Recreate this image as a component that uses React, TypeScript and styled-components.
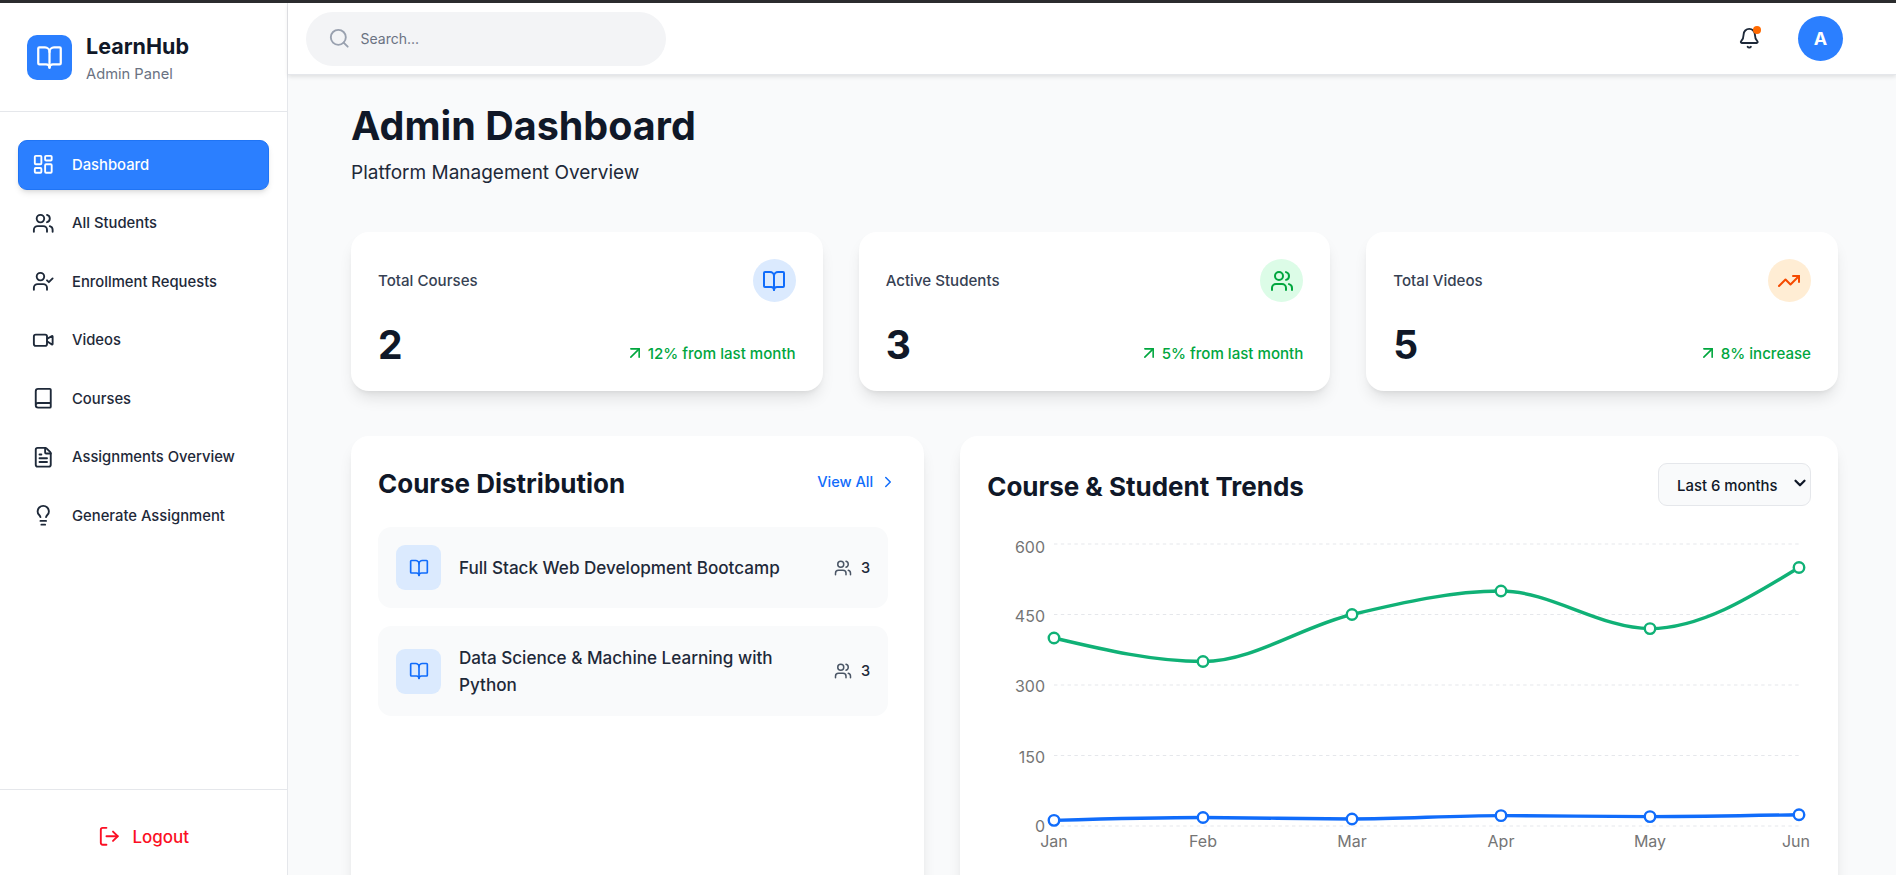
import React from "react";
import styled, {createGlobalStyle} from "styled-components";
import {
    ArrowUpRight, Bell, Book, BookOpen, ChevronDown, ChevronRight, FileText, LayoutDashboard,
    Lightbulb, LogOut, Search, TrendingUp, UserCheck, Users, Video
} from "lucide-react";

const blue = "#2b7fff";
const link = "#106cfb";
const green = "#00a63e";
const ink = "#101828";
const slate = "#1e2939";

const GlobalStyle = createGlobalStyle`
html, body { margin: 0; height: 100%; overflow: hidden; }
body { font-family: Inter, "Noto Sans", "Liberation Sans", sans-serif; color: ${ink}; background: #f9fafb; }
* { box-sizing: border-box; }
`;

const navItems = [
    {label: "Dashboard", icon: LayoutDashboard, active: true},
    {label: "All Students", icon: Users},
    {label: "Enrollment Requests", icon: UserCheck},
    {label: "Videos", icon: Video},
    {label: "Courses", icon: Book},
    {label: "Assignments Overview", icon: FileText},
    {label: "Generate Assignment", icon: Lightbulb},
];

const stats = [
    {label: "Total Courses", value: 2, trend: "12% from last month", icon: BookOpen, bg: "#dbeafe", fg: link},
    {label: "Active Students", value: 3, trend: "5% from last month", icon: Users, bg: "#dcfce7", fg: green},
    {label: "Total Videos", value: 5, trend: "8% increase", icon: TrendingUp, bg: "#ffedd4", fg: "#f54a00"},
];

const courses = [
    {title: "Full Stack Web Development Bootcamp", students: 3},
    {title: "Data Science & Machine Learning with Python", students: 3},
];

// chart geometry, in px inside the svg
const months = ["Jan", "Feb", "Mar", "Apr", "May", "Jun"];
const left = 67;
const stepX = 149;
const zeroY = 293;
const pxPerUnit = 282 / 600;
const xs = months.map((_, i) => left + i * stepX);
const toY = (v: number) => zeroY - v * pxPerUnit;
const greenLine = [400, 350, 450, 500, 420, 550].map(toY);
const blueLine = [12, 18, 15, 22, 20, 24].map(toY);
const ticks = [600, 450, 300, 150, 0];

const sign = (n: number) => (n < 0 ? -1 : 1);

// same curve as d3's curveMonotoneX
const monotonePath = (px: number[], py: number[]) => {
    const n = px.length;
    const s = px.slice(1).map((x, i) => (py[i + 1] - py[i]) / (x - px[i]));
    const t = px.map(() => 0);
    for (let i = 1; i < n - 1; i++) {
        const h0 = px[i] - px[i - 1];
        const h1 = px[i + 1] - px[i];
        const p = (s[i - 1] * h1 + s[i] * h0) / (h0 + h1);
        t[i] = (sign(s[i - 1]) + sign(s[i])) * Math.min(Math.abs(s[i - 1]), Math.abs(s[i]), 0.5 * Math.abs(p)) || 0;
    }
    t[0] = (3 * s[0] - t[1]) / 2;
    t[n - 1] = (3 * s[n - 2] - t[n - 2]) / 2;
    let d = `M${px[0]},${py[0]}`;
    for (let i = 0; i < n - 1; i++) {
        const h = (px[i + 1] - px[i]) / 3;
        d += `C${px[i] + h},${py[i] + h * t[i]},${px[i + 1] - h},${py[i + 1] - h * t[i + 1]},${px[i + 1]},${py[i + 1]}`;
    }
    return d;
};

const Series: React.FC<{ values: number[], color: string }> = ({values, color}) => <>
    <path d={monotonePath(xs, values)} fill="none" stroke={color} strokeWidth={3.4}/>
    {xs.map((x, i) => <circle key={x} cx={x} cy={values[i]} r={5.25} fill="#fff" stroke={color} strokeWidth={2.4}/>)}
</>;

const App: React.FC = () => <>
    <GlobalStyle/>
    <TopEdge/>
    <Shell>
        <Sidebar>
            <Brand>
                <BrandMark><BookOpen size={27} strokeWidth={2}/></BrandMark>
                <BrandText>
                    <BrandName>LearnHub</BrandName>
                    <BrandSub>Admin Panel</BrandSub>
                </BrandText>
            </Brand>
            <Nav>
                {navItems.map(item => <NavItem key={item.label} $active={!!item.active}>
                    <item.icon size={22.5} strokeWidth={2}/>
                    {item.label}
                </NavItem>)}
            </Nav>
            <SideFooter>
                <Logout><LogOut size={22.5} strokeWidth={2}/>Logout</Logout>
            </SideFooter>
        </Sidebar>
        <Column>
            <Header>
                <SearchBox>
                    <Search size={22.5} color="#99a1af" strokeWidth={2}/>
                    <SearchInput placeholder="Search..."/>
                </SearchBox>
                <HeaderRight>
                    <BellWrap>
                        <Bell size={22.5} color={slate} strokeWidth={2}/>
                        <BellDot/>
                    </BellWrap>
                    <Avatar>A</Avatar>
                </HeaderRight>
            </Header>
            <Main>
                <PageTitle>Admin Dashboard</PageTitle>
                <PageSub>Platform Management Overview</PageSub>
                <StatGrid>
                    {stats.map(stat => <StatCard key={stat.label}>
                        <StatTop>
                            <StatLabel>{stat.label}</StatLabel>
                            <StatIcon $bg={stat.bg} $fg={stat.fg}><stat.icon size={24} strokeWidth={2}/></StatIcon>
                        </StatTop>
                        <StatBottom>
                            <StatValue>{stat.value}</StatValue>
                            <Trend><ArrowUpRight size={20} strokeWidth={1.9}/>{stat.trend}</Trend>
                        </StatBottom>
                    </StatCard>)}
                </StatGrid>
                <LowerGrid>
                    <Panel $span={2}>
                        <DistHead>
                            <PanelTitle>Course Distribution</PanelTitle>
                            <ViewAll>View All<ChevronRight size={18} strokeWidth={2}/></ViewAll>
                        </DistHead>
                        <CourseList>
                            {courses.map(course => <CourseRow key={course.title}>
                                <CourseIcon><BookOpen size={20} strokeWidth={2}/></CourseIcon>
                                <CourseTitle>{course.title}</CourseTitle>
                                <CourseCount><Users size={18} color="#4a5565" strokeWidth={2}/>{course.students}</CourseCount>
                            </CourseRow>)}
                        </CourseList>
                    </Panel>
                    <Panel $span={3}>
                        <TrendHead>
                            <PanelTitle>Course &amp; Student Trends</PanelTitle>
                            <SelectWrap>
                                <RangeSelect defaultValue="6">
                                    <option value="6">Last 6 months</option>
                                    <option value="12">Last year</option>
                                </RangeSelect>
                                <SelectArrow><ChevronDown size={18} strokeWidth={3}/></SelectArrow>
                            </SelectWrap>
                        </TrendHead>
                        <Chart width="824" height="337" viewBox="0 0 824 337">
                            {ticks.map(t => <g key={t}>
                                <line x1={left} x2={xs[5]} y1={toY(t)} y2={toY(t)} stroke="#e5e7eb" strokeWidth={1.1} strokeDasharray="3.4 3.4"/>
                                <Tick x={58} y={t === 600 ? toY(t) + 9 : t === 0 ? toY(t) + 6 : toY(t) + 7} textAnchor="end">{t}</Tick>
                            </g>)}
                            {months.map((m, i) => <Tick key={m} x={i === 5 ? xs[i] + 11 : xs[i]} y={314} textAnchor={i === 5 ? "end" : "middle"}>{m}</Tick>)}
                            <Series values={greenLine} color="#10b176"/>
                            <Series values={blueLine} color={link}/>
                        </Chart>
                    </Panel>
                </LowerGrid>
            </Main>
        </Column>
    </Shell>
</>;

const TopEdge = styled.div`
height: 3px;
background: #2b2c2e;
`;
const Shell = styled.div`
display: flex;
height: 872px;
overflow: hidden;
`;
const Sidebar = styled.aside`
width: 288px;
flex-shrink: 0;
display: flex;
flex-direction: column;
background: #fff;
border-right: 1px solid #e5e7eb;
`;
const Brand = styled.div`
height: 109px;
flex-shrink: 0;
display: flex;
align-items: center;
gap: 14px;
padding: 0 27px;
border-bottom: 1px solid #e5e7eb;
`;
const BrandMark = styled.div`
width: 45px;
height: 45px;
display: flex;
align-items: center;
justify-content: center;
border-radius: 10px;
background: ${blue};
color: #fff;
`;
const BrandText = styled.div`
margin-top: 6px;
`;
const BrandName = styled.div`
font-size: 21.5px;
font-weight: 700;
line-height: 28px;
color: ${ink};
`;
const BrandSub = styled.div`
font-size: 14.7px;
line-height: 28px;
color: #6a7282;
`;
const Nav = styled.nav`
flex: 1;
display: flex;
flex-direction: column;
gap: 8.5px;
padding: 27.5px 18px 0;
`;
const NavItem = styled.a<{ $active: boolean }>`
height: 50px;
display: flex;
align-items: center;
gap: 18px;
padding: 0 12.5px;
border-radius: 9px;
font-size: 14.8px;
font-weight: 500;
color: ${p => (p.$active ? "#fff" : slate)};
background: ${p => (p.$active ? blue : "transparent")};
border: 1px solid ${p => (p.$active ? "#1f74f5" : "transparent")};
box-shadow: ${p => (p.$active ? "0 4px 6px -1px rgba(0,0,0,.1), 0 2px 4px -2px rgba(0,0,0,.1)" : "none")};
`;
const SideFooter = styled.div`
height: 86px;
flex-shrink: 0;
padding-top: 8px;
display: flex;
align-items: center;
justify-content: center;
border-top: 1px solid #e5e7eb;
`;
const Logout = styled.a`
display: flex;
align-items: center;
gap: 12px;
font-size: 17px;
font-weight: 500;
color: #fb0f24;
`;
const Column = styled.div`
flex: 1;
min-width: 0;
display: flex;
flex-direction: column;
`;
const Header = styled.header`
height: 72px;
flex-shrink: 0;
display: flex;
align-items: center;
justify-content: space-between;
padding: 0 53px 0 18px;
background: #fff;
border-bottom: 1px solid #e5e7eb;
box-shadow: 0 2px 4px rgba(0,0,0,.1);
position: relative;
`;
const SearchBox = styled.div`
width: 360px;
height: 54px;
display: flex;
align-items: center;
gap: 8px;
padding: 0 22px;
border-radius: 27px;
background: #f3f4f6;
`;
const SearchInput = styled.input`
flex: 1;
min-width: 0;
border: none;
outline: none;
background: transparent;
font: 400 14px Inter, sans-serif;
&::placeholder { color: #6a7282; }
`;
const HeaderRight = styled.div`
display: flex;
align-items: center;
gap: 38px;
`;
const BellWrap = styled.div`
position: relative;
display: flex;
`;
const BellDot = styled.span`
position: absolute;
top: -1px;
right: -1px;
width: 8px;
height: 8px;
border-radius: 50%;
background: #ff6900;
`;
const Avatar = styled.div`
width: 45px;
height: 45px;
display: flex;
align-items: center;
justify-content: center;
border-radius: 50%;
background: ${blue};
color: #fff;
font-size: 18px;
font-weight: 700;
`;
const Main = styled.main`
flex: 1;
min-height: 0;
overflow: hidden;
padding: 26px 58px 0 63px;
background: #f9fafb;
`;
const PageTitle = styled.h1`
margin: 0;
font-size: 39.5px;
font-weight: 700;
line-height: 50px;
color: ${ink};
`;
const PageSub = styled.p`
margin: 8px 0 0;
font-size: 19px;
line-height: 27px;
color: ${slate};
`;
const StatGrid = styled.div`
display: grid;
grid-template-columns: repeat(3, 1fr);
gap: 36px;
margin-top: 46px;
`;
const StatCard = styled.div`
height: 159px;
padding: 27px 27px 24px;
display: flex;
flex-direction: column;
justify-content: space-between;
border-radius: 18px;
background: #fff;
box-shadow: 0 10px 15px -3px rgba(0,0,0,.1), 0 4px 6px -4px rgba(0,0,0,.1);
`;
const StatTop = styled.div`
display: flex;
align-items: center;
justify-content: space-between;
`;
const StatLabel = styled.span`
font-size: 15.1px;
font-weight: 500;
color: #364153;
`;
const StatIcon = styled.div<{ $bg: string, $fg: string }>`
width: 43px;
height: 43px;
display: flex;
align-items: center;
justify-content: center;
border-radius: 50%;
background: ${p => p.$bg};
color: ${p => p.$fg};
`;
const StatBottom = styled.div`
display: flex;
align-items: flex-end;
justify-content: space-between;
`;
const StatValue = styled.span`
font-size: 39px;
font-weight: 700;
line-height: 45px;
color: ${ink};
`;
const Trend = styled.span`
display: flex;
align-items: center;
gap: 3px;
margin-bottom: 4px;
font-size: 15.1px;
font-weight: 500;
color: ${green};
`;
const LowerGrid = styled.div`
display: grid;
grid-template-columns: repeat(5, minmax(0, 1fr));
column-gap: 36px;
margin-top: 45px;
`;
const Panel = styled.section<{ $span: number }>`
grid-column: span ${p => p.$span};
padding: 27px;
border-radius: 18px;
background: #fff;
box-shadow: 0 10px 15px -3px rgba(0,0,0,.1), 0 4px 6px -4px rgba(0,0,0,.1);
`;
const DistHead = styled.div`
height: 36px;
display: flex;
align-items: center;
justify-content: space-between;
margin-bottom: 28px;
`;
const PanelTitle = styled.h2`
margin: 0;
padding-top: 4px;
font-size: 26px;
font-weight: 700;
color: ${ink};
`;
const ViewAll = styled.a`
display: flex;
align-items: center;
gap: 6px;
padding-top: 2px;
font-size: 14.6px;
font-weight: 500;
color: ${link};
`;
const CourseList = styled.div`
display: flex;
flex-direction: column;
gap: 18px;
margin-right: 9px;
`;
const CourseRow = styled.div`
display: flex;
align-items: center;
gap: 18px;
padding: 18px;
border-radius: 13.5px;
background: #f9fafb;
`;
const CourseIcon = styled.div`
width: 45px;
height: 45px;
flex-shrink: 0;
display: flex;
align-items: center;
justify-content: center;
border-radius: 9px;
background: #dbeafe;
color: ${link};
`;
const CourseTitle = styled.div`
flex: 1;
font-size: 17.1px;
font-weight: 500;
line-height: 27px;
color: ${slate};
`;
const CourseCount = styled.div`
display: flex;
align-items: center;
gap: 9px;
font-size: 14.6px;
font-weight: 500;
color: ${slate};
`;
const TrendHead = styled.div`
display: flex;
align-items: center;
justify-content: space-between;
margin-bottom: 27px;
`;
const SelectWrap = styled.div`
position: relative;
display: flex;
`;
const RangeSelect = styled.select`
appearance: none;
width: 153px;
height: 43px;
padding: 2px 12px 0 18px;
border: 1px solid #e5e7eb;
border-radius: 9px;
background: #f9fafb;
font: 500 14.9px Inter, sans-serif;
color: ${ink};
`;
const SelectArrow = styled.span`
position: absolute;
top: 11px;
right: 2px;
display: flex;
color: ${ink};
pointer-events: none;
`;
const Chart = styled.svg`
display: block;
`;
const Tick = styled.text`
font-size: 16px;
fill: #757575;
`;

export default App;
